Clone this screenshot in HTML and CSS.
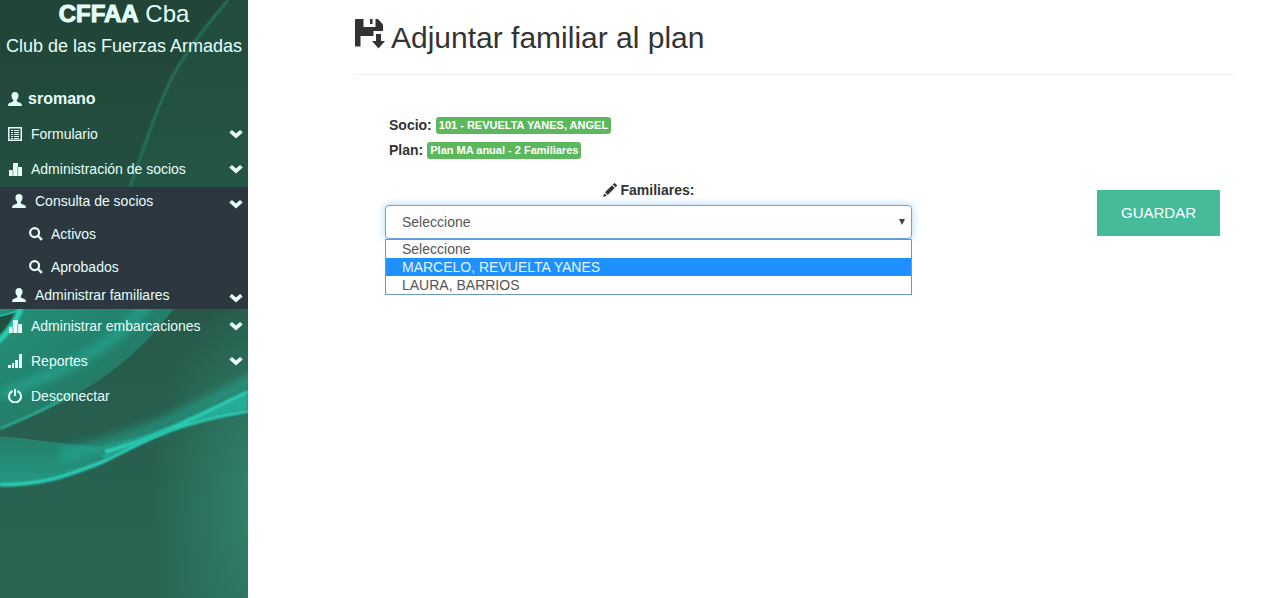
FILE: index.html
```html
<!DOCTYPE html>
<html lang="es">
<head>
<meta charset="utf-8">
<meta name="viewport" content="width=device-width, initial-scale=1">
<title>Adjuntar familiar al plan</title>
<link rel="stylesheet" href="styles.css">
</head>
<body>
<svg class="sprite" aria-hidden="true">
  <symbol id="user" viewBox="0 0 14 14"><path d="M7 0C4.800 0 3.500 1.500 3.500 3.500c0 1.800.6 3.300 1.700 4.300v1.500C5.200 10 1 10.800.4 12L0 14h14l-.4-2C13 10.800 8.800 10 8.800 9.300V7.800c1.100-1 1.700-2.500 1.700-4.300C10.500 1.500 9.200 0 7 0z"/></symbol>
  <symbol id="list" viewBox="0 0 14 14"><path fill-rule="evenodd" d="M0 0h14v14H0zM1.500 1.500v11h11v-11z"/><path d="M3 3h2v1H3zm3 0h5v1H6zM3 5h2v1H3zm3 0h5v1H6zM3 7h2v1H3zm3 0h5v1H6zM3 9h2v1H3zm3 0h5v1H6zM3 11h2v1H3zm3 0h5v1H6z"/></symbol>
  <symbol id="stats" viewBox="0 0 14 14"><path d="M1 8h4v6H1zM5 1h5v13H5zM10 5h4v9h-4z"/><path fill="#24503f" opacity=".6" d="M4.500 8h.8v6h-.8zM9.300 5h.8v9h-.8z"/></symbol>
  <symbol id="signal" viewBox="0 0 14 14"><path d="M0 11h3v3H0zM4 9h2v5H4zM7 6h3v8H7zM11 0h3v14h-3z"/></symbol>
  <symbol id="power" viewBox="0 0 14 14"><path fill="none" stroke="currentColor" stroke-width="2" d="M4.500 2A6 6 0 1 0 9.500 2"/><path d="M6 0h2v7H6z"/></symbol>
  <symbol id="search" viewBox="0 0 15 15"><circle cx="6" cy="6" r="4.800" fill="none" stroke="currentColor" stroke-width="2.300"/><path d="m8.600 10.300 1.700-1.700 4.500 4.200-2 2z"/></symbol>
  <symbol id="chevron" viewBox="0 0 14 10"><path d="M.3 3.500 2.900 1 7 4.500 11.100 1l2.600 2.500L7 9.600z"/></symbol>
  <symbol id="save" viewBox="0 0 30 30"><path d="M1 0h7.500v8h12V0H23l5 5.500V12h-9.500v5H5.500v10.500H0V1a1 1 0 0 1 1-1zM15 0h2.500v5H15z"/><path d="M21 15h5v7h4l-6.500 7.500L17 22h4z"/></symbol>
  <symbol id="pencil" viewBox="0 0 14 14"><path d="m0 14 1.300-3.800 2.500 2.500zM2 9.300l7-7 2.700 2.700-7 7zM9.800 1.600 11.200.2c.2-.2.500-.2.700 0l2 2c.2.200.2.500 0 .8l-1.400 1.300z"/></symbol>
</svg>

<div class="page">
  <aside class="sidebar">
    <svg class="waves" viewBox="0 0 248 598" preserveAspectRatio="none" aria-hidden="true">
      <defs>
        <linearGradient id="base" x1="0" y1="0" x2="0" y2="1">
          <stop offset="0" stop-color="#214437"/><stop offset=".3" stop-color="#235040"/>
          <stop offset=".6" stop-color="#275c4b"/><stop offset="1" stop-color="#2a6554"/>
        </linearGradient>
        <radialGradient id="side" gradientUnits="userSpaceOnUse" cx="0" cy="0" r="1" gradientTransform="translate(270 500) scale(120 220)">
          <stop offset="0" stop-color="#31866f"/><stop offset="1" stop-color="#31866f" stop-opacity="0"/>
        </radialGradient>
        <linearGradient id="mid" x1="0" y1="0" x2="1" y2="1">
          <stop offset="0" stop-color="#239b83"/><stop offset=".6" stop-color="#23806c"/><stop offset="1" stop-color="#266b58"/>
        </linearGradient>
        <linearGradient id="low" x1="0" y1="0" x2="0" y2="1">
          <stop offset="0" stop-color="#238c76" stop-opacity=".2"/><stop offset="1" stop-color="#239a83"/>
        </linearGradient>
        <filter id="soft" x="-20%" y="-50%" width="140%" height="200%"><feGaussianBlur stdDeviation="5"/></filter>
        <filter id="thin" x="-20%" y="-50%" width="140%" height="200%"><feGaussianBlur stdDeviation="1"/></filter>
      </defs>
      <path fill="url(#base)" d="M0 0h248v598H0z"/>
      <path fill="url(#side)" d="M0 280h248v318H0z"/>
      <path fill="#286f5b" opacity=".2" d="M228 0C168 70 160 98 130 187h118V0z"/>
      <path fill="none" stroke="#2b8b70" stroke-width="2" opacity=".8" filter="url(#thin)" d="M228 0C168 70 165 87 130 187"/>
      <path fill="url(#mid)" d="M0 300h180C145 350 95 395 0 429z" opacity=".85"/>
      <path fill="none" stroke="#25b49b" stroke-width="10" opacity=".6" filter="url(#soft)" d="M150 300C120 340 80 365 0 395"/>
      <path fill="none" stroke="#35caae" stroke-width="2" opacity=".8" filter="url(#thin)" d="M0 429C30 416 50 407 70 395"/>
      <path fill="#214f40" d="M0 317 16 313C14 324 6 332 0 337z"/>
      <path fill="none" stroke="#2bccb1" stroke-width="6" filter="url(#thin)" d="M22 305C16 322 8 333-3 342"/>
      <path fill="none" stroke="#2bccb1" stroke-width="1" d="M0 316 17 311"/>
      <path fill="url(#low)" d="M0 437C40 440 70 446 100 446 150 436 195 415 248 390v21C170 424 145 445 105 461 60 478 40 485 0 485z"/>
      <path fill="none" stroke="#24baa2" stroke-width="12" opacity=".5" filter="url(#soft)" d="M60 455C140 440 190 412 260 376"/>
      <path fill="none" stroke="#288b74" stroke-width="1" d="M0 437c30 2 60 9 105 9"/>
      <path fill="none" stroke="#2cd8bf" stroke-width="3" filter="url(#thin)" d="M0 485c45 0 70-10 105-24 40-20 65-37 143-50"/>
      <path fill="none" stroke="#2bd0b8" stroke-width="4" filter="url(#thin)" d="M105 452c50-14 90-34 143-60"/>
      <path fill="#25b8a1" opacity=".8" filter="url(#thin)" d="M100 456c50-14 90-34 148-63v16c-70 13-100 27-143 49z"/>
    </svg>
    <header class="brand">
      <h1 class="brand-name"><strong>CFFAA</strong> Cba</h1>
      <p class="brand-text">Club de las Fuerzas Armadas</p>
    </header>
    <nav>
      <ul class="menu">
        <li><a class="item account" href="#"><svg class="icon"><use href="#user"/></svg><strong>sromano</strong></a></li>
        <li><a class="item" href="#"><svg class="icon"><use href="#list"/></svg>Formulario<svg class="chevron"><use href="#chevron"/></svg></a></li>
        <li><a class="item" href="#"><svg class="icon"><use href="#stats"/></svg>Administración de socios<svg class="chevron"><use href="#chevron"/></svg></a>
          <ul class="submenu">
            <li><a class="item" href="#"><svg class="icon"><use href="#user"/></svg>Consulta de socios<svg class="chevron"><use href="#chevron"/></svg></a>
              <ul class="leaves">
                <li><a class="item" href="#"><svg class="icon"><use href="#search"/></svg>Activos</a></li>
                <li><a class="item" href="#"><svg class="icon"><use href="#search"/></svg>Aprobados</a></li>
              </ul>
            </li>
            <li><a class="item" href="#"><svg class="icon"><use href="#user"/></svg>Administrar familiares<svg class="chevron"><use href="#chevron"/></svg></a></li>
          </ul>
        </li>
        <li><a class="item" href="#"><svg class="icon"><use href="#stats"/></svg>Administrar embarcaciones<svg class="chevron"><use href="#chevron"/></svg></a></li>
        <li><a class="item" href="#"><svg class="icon"><use href="#signal"/></svg>Reportes<svg class="chevron"><use href="#chevron"/></svg></a></li>
        <li><a class="item" href="#"><svg class="icon"><use href="#power"/></svg>Desconectar</a></li>
      </ul>
    </nav>
  </aside>

  <main class="content">
    <h2 class="title"><svg class="title-icon" aria-hidden="true"><use href="#save"/></svg>Adjuntar familiar al plan</h2>
    <div class="details">
      <p class="detail"><b>Socio:</b><span class="badge">101 - REVUELTA YANES, ANGEL</span></p>
      <p class="detail"><b>Plan:</b><span class="badge">Plan MA anual - 2 Familiares</span></p>
    </div>
    <form class="form">
      <div class="field">
        <label class="label" for="familiares"><svg class="icon" aria-hidden="true"><use href="#pencil"/></svg>Familiares:</label>
        <div class="picker">
          <select class="select" id="familiares">
            <option>Seleccione</option>
            <option>MARCELO, REVUELTA YANES</option>
            <option>LAURA, BARRIOS</option>
          </select>
          <svg class="arrow" viewBox="0 0 6 6" aria-hidden="true"><path d="M0 0h6L3 6z"/></svg>
          <ul class="options" role="listbox" aria-label="Familiares">
            <li class="option" role="option">Seleccione</li>
            <li class="option active" role="option" aria-selected="true">MARCELO, REVUELTA YANES</li>
            <li class="option" role="option">LAURA, BARRIOS</li>
          </ul>
        </div>
      </div>
      <button class="save" type="button">GUARDAR</button>
    </form>
  </main>
</div>
</body>
</html>
```
FILE: styles.css
```css
* { box-sizing: border-box; }

body {
  margin: 0;
  background: #fff;
  color: #333;
  font-family: "Liberation Sans", Arial, sans-serif;
  font-size: 14px;
  line-height: 20px;
}

h1, h2, p, ul { margin: 0; padding: 0; }
ul { list-style: none; }
svg { fill: currentColor; }

.sprite { position: absolute; width: 0; height: 0; }

.page { display: flex; min-height: 100vh; }

.sidebar {
  position: relative;
  flex: none;
  width: 248px;
  overflow: hidden;
  color: #e6fffb;
  background: #235040;
}
.waves { position: absolute; inset: 0; width: 100%; height: 100%; }
.brand, .sidebar nav { position: relative; }
.brand { padding-bottom: 18px; text-align: center; white-space: nowrap; }
.brand-name { font-size: 24px; font-weight: 400; line-height: 28px; }
.brand-name strong { -webkit-text-stroke: 1px currentColor; }
.brand-text { font-size: 18px; line-height: 36px; }

.item {
  display: flex;
  align-items: center;
  gap: 9px;
  height: 35px;
  padding: 0 5px 2px 8px;
  color: inherit;
  text-decoration: none;
}
.icon { flex: none; width: 14px; height: 14px; }
.chevron { width: 14px; height: 10px; margin-left: auto; }
.account { gap: 6px; font-size: 16px; }

.submenu { background: #2c3740; }
.submenu .item { height: 28px; padding: 0 5px 0 12px; }
.submenu .chevron { margin-top: 6px; }
.leaves .item,
.submenu .leaves .item { height: 33px; padding: 5px 5px 0 29px; gap: 8px; }

.content { flex: 1; padding: 19px 42px 19px 107px; }

.title {
  display: flex;
  gap: 6px;
  padding-bottom: 18px;
  border-bottom: 1px solid #eee;
  font-size: 30px;
  font-weight: 400;
  line-height: 37px;
}
.title-icon { width: 30px; height: 30px; }

.details { padding: 37px 34px 0; }
.detail { display: flex; align-items: center; gap: 4px; height: 25px; }
.badge {
  margin-top: 2px;
  padding: 0 3px;
  border-radius: 3px;
  background: #5cb85c;
  color: #fff;
  font-size: 11px;
  font-weight: 700;
  line-height: 17px;
}

.form {
  display: grid;
  grid-template-columns: 527fr 308fr;
  padding: 18px 15px 0 30px;
}
.label {
  display: flex;
  align-items: center;
  justify-content: center;
  gap: 4px;
  padding-bottom: 5px;
  font-weight: 700;
}
.picker { position: relative; }
.select {
  appearance: none;
  display: block;
  width: 100%;
  height: 34px;
  padding: 0 16px;
  border: 1px solid #66a3e0;
  border-radius: 4px;
  background: #fff;
  box-shadow: 0 0 8px #a8d5f5;
  color: #555;
  font: inherit;
}
.arrow { position: absolute; top: 14px; right: 7px; width: 6px; height: 6px; color: #444; }
.options {
  position: absolute;
  top: 100%;
  left: 0;
  right: 0;
  border: 1px solid #6f98c8;
  background: #fff;
  color: #555;
}
.option { padding: 0 16px; line-height: 18px; }
.option.active { background: #1e90ff; color: #e6f5ff; }

.save {
  justify-self: end;
  align-self: start;
  margin-top: 10px;
  padding: 0 24px;
  border: 0;
  background: #45bb99;
  color: #fff;
  font-family: inherit;
  font-size: 15px;
  line-height: 46px;
}
```
